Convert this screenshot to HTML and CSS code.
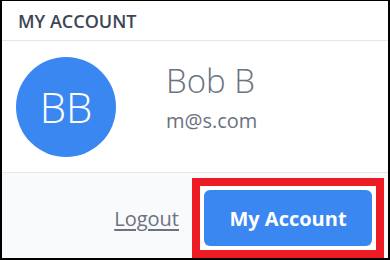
FILE: index.html
```html
<!DOCTYPE html>
<html>
<head>
<meta charset="utf-8">
<link rel="stylesheet" href="styles.css">
</head>
<body>
<div class="card">
  <div class="card-header">MY ACCOUNT</div>
  <div class="card-body">
    <div class="avatar">BB</div>
    <div class="info">
      <div class="name">Bob B</div>
      <div class="email">m@s.com</div>
    </div>
  </div>
  <div class="card-footer">
    <a class="logout" href="#">Logout</a>
    <div class="highlight">
      <button class="btn">My Account</button>
    </div>
  </div>
</div>
</body>
</html>
```
FILE: styles.css
```css
* { box-sizing: border-box; }
html, body { margin: 0; padding: 0; background: #fff; }
body { font-family: "Open Sans", "Liberation Sans", sans-serif; }
.card {
  width: 390px;
  height: 260px;
  border-style: solid;
  border-color: #000;
  border-width: 1px 2px 2px 2px;
  display: flex;
  flex-direction: column;
  background: #fff;
}
.card-header {
  height: 40px;
  border-bottom: 1px solid #e5e7eb;
  padding-left: 16px;
  display: flex;
  align-items: center;
  font-size: 18px;
  font-weight: 600;
  color: #3c4656;
}
.card-body {
  height: 131px;
  display: flex;
  align-items: center;
  padding-left: 14px;
}
.avatar {
  width: 100px;
  height: 100px;
  border-radius: 50%;
  background: #3b87f2;
  color: #fff;
  display: flex;
  align-items: center;
  justify-content: center;
  font-size: 42px;
  font-weight: 300;
}
.info {
  align-self: flex-start;
  margin-top: 20px;
  margin-left: 50px;
  color: #6b7280;
}
.name {
  font-size: 33px;
  font-weight: 300;
  line-height: 40px;
}
.email {
  margin-top: 6px;
  font-size: 20px;
  line-height: 28px;
}
.card-footer {
  flex: 1;
  border-top: 1px solid #e5e7eb;
  background: #f9fafb;
  display: flex;
  justify-content: flex-end;
  align-items: flex-end;
  padding-right: 4px;
}
.logout {
  font-size: 20px;
  color: #6b7280;
  text-decoration: underline;
  text-underline-offset: 3px;
  margin-right: 13px;
  margin-bottom: 25px;
  line-height: 28px;
}
.highlight {
  border: 8px solid #ed1c24;
  background: #fff;
  padding: 4px;
}
.btn {
  display: block;
  width: 168px;
  height: 56px;
  border: none;
  border-radius: 6px;
  background: #3b87f2;
  color: #fff;
  font-family: "Open Sans", "Liberation Sans", sans-serif;
  font-size: 20px;
  font-weight: 700;
  padding: 0;
}
```
